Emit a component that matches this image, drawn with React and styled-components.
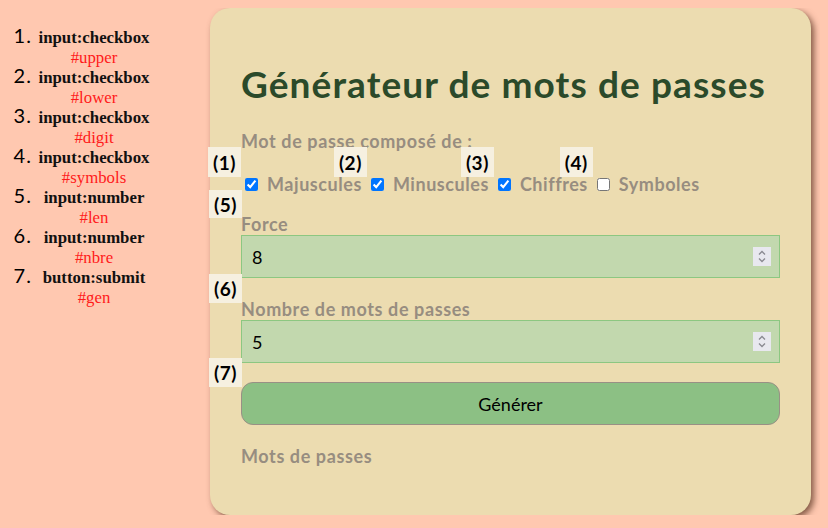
import React from 'react';
import styled, { createGlobalStyle } from 'styled-components';

const GlobalStyle = createGlobalStyle`
  body {
    margin: 8px;
    background-color: #ffc8b0;
    font-family: Lato, "Open Sans", sans-serif;
  }
`;

const Page = styled.div`
  display: flex;
  align-items: flex-start;
`;

const Legend = styled.ol`
  margin: 17px 0 0 0;
  padding-left: 30px;
  width: 112px;
  font-family: Lato, sans-serif;
  font-size: 20px;
  line-height: 20px;

  li {
    height: 40px;
    text-align: center;
  }
  li::marker {
    letter-spacing: 1px;
  }
`;

const Kind = styled.span`
  display: block;
  font-family: "Liberation Serif", serif;
  font-weight: bold;
  font-size: 16.8px;
  line-height: 20px;
  color: #111;
`;

const Ident = styled.span`
  display: block;
  font-family: "Liberation Serif", serif;
  font-size: 16.8px;
  line-height: 20px;
  color: #ff1a1a;
`;

const Panel = styled.div`
  position: relative;
  margin-left: 60px;
  width: 601px;
  height: 507px;
  box-sizing: border-box;
  padding: 30px 31px;
  background-color: #ecdcb0;
  border-radius: 20px;
  box-shadow: 3px 3px 6px rgba(110, 70, 50, 0.85);
`;

const Title = styled.h1`
  margin: 25px 0 25px;
  font-size: 37px;
  line-height: 42px;
  font-weight: 700;
  color: #2b4a2a;
  letter-spacing: 1.1px;
`;

const Caption = styled.div`
  font-size: 18px;
  font-weight: 700;
  color: #978d80;
  line-height: 22px;
  letter-spacing: 0.6px;
`;

const Checks = styled.div`
  display: flex;
  align-items: center;
  margin-top: 21px;
  height: 22px;
`;

const CheckItem = styled.label`
  position: relative;
  display: inline-flex;
  align-items: center;
  margin-right: 5px;
  font-size: 18px;
  font-weight: 700;
  letter-spacing: 0.55px;
  color: #978d80;

  input {
    margin: 3px 9px 3px 4px;
    width: 13px;
    height: 13px;
  }
`;

const Badge = styled.span`
  position: absolute;
  ${({ $left }) => $left !== undefined && `left: ${$left}px;`}
  ${({ $top }) => $top !== undefined && `top: ${$top}px;`}
  ${({ $attached }) => $attached && `right: 100%; bottom: 100%; margin-bottom: -4px;`}
  width: 33px;
  height: ${({ $h }) => $h || 30}px;
  display: flex;
  align-items: center;
  justify-content: center;
  background-color: #f6f0e0;
  font-size: 19px;
  font-weight: 700;
  letter-spacing: 0.5px;
  color: #000;
`;

const Field = styled.div`
  margin-top: ${({ $gap }) => $gap}px;
`;

const InputBox = styled.div`
  position: relative;
`;

const NumberInput = styled.input`
  display: block;
  width: 100%;
  height: 43px;
  box-sizing: border-box;
  padding: 0 10px;
  background-color: #c2d8ae;
  border: 1px solid #8cc781;
  font-family: Lato, sans-serif;
  font-size: 18px;
  color: #000;
  outline: none;
  -moz-appearance: textfield;

  &::-webkit-inner-spin-button,
  &::-webkit-outer-spin-button {
    -webkit-appearance: none;
    margin: 0;
  }
`;

const Spinner = styled.span`
  position: absolute;
  right: 9px;
  top: 12px;
  width: 18px;
  height: 19px;
  background-color: #e8e8ef;
  display: flex;
  align-items: center;
  justify-content: center;
  pointer-events: none;
`;

const Submit = styled.button`
  display: block;
  width: 100%;
  height: 43px;
  margin-top: 19px;
  background-color: #8cc084;
  border: 1px solid #999085;
  border-radius: 12px;
  font-family: Lato, sans-serif;
  font-size: 18px;
  color: #000;
`;

const Result = styled(Caption)`
  margin-top: 20px;
`;

const legend = [
  ['input:checkbox', '#upper'],
  ['input:checkbox', '#lower'],
  ['input:checkbox', '#digit'],
  ['input:checkbox', '#symbols'],
  ['input:number', '#len'],
  ['input:number', '#nbre'],
  ['button:submit', '#gen'],
];

const checks = [
  { n: 1, label: 'Majuscules', on: true },
  { n: 2, label: 'Minuscules', on: true },
  { n: 3, label: 'Chiffres', on: true },
  { n: 4, label: 'Symboles', on: false },
];

const SpinIcon = () => (
  <svg width="10" height="15" viewBox="0 0 10 15" fill="none" stroke="#8a8a92" strokeWidth="1.3">
    <path d="M2 5.5 L5 2.5 L8 5.5" />
    <path d="M2 9.5 L5 12.5 L8 9.5" />
  </svg>
);

const Number = ({ value }) => (
  <InputBox>
    <NumberInput type="number" defaultValue={value} />
    <Spinner>
      <SpinIcon />
    </Spinner>
  </InputBox>
);

export default function App() {
  return (
    <>
      <GlobalStyle />
      <Page>
        <Legend>
          {legend.map(([kind, id]) => (
            <li key={id}>
              <Kind>{kind}</Kind>
              <Ident>{id}</Ident>
            </li>
          ))}
        </Legend>

        <Panel>
          <Title>Générateur de mots de passes</Title>
          <Caption>Mot de passe composé de :</Caption>
          <Checks>
            {checks.map((c) => (
              <CheckItem key={c.n}>
                <Badge $attached>({c.n})</Badge>
                <input type="checkbox" defaultChecked={c.on} />
                {c.label}
              </CheckItem>
            ))}
          </Checks>

          <Badge $left={-1} $top={182} $h={28}>(5)</Badge>
          <Field $gap={18}>
            <Caption>Force</Caption>
            <Number value={8} />
          </Field>

          <Badge $left={-1} $top={266} $h={29}>(6)</Badge>
          <Field $gap={20}>
            <Caption>Nombre de mots de passes</Caption>
            <Number value={5} />
          </Field>

          <Badge $left={-1} $top={350} $h={29}>(7)</Badge>
          <Submit type="submit">Générer</Submit>

          <Result>Mots de passes</Result>
        </Panel>
      </Page>
    </>
  );
}
